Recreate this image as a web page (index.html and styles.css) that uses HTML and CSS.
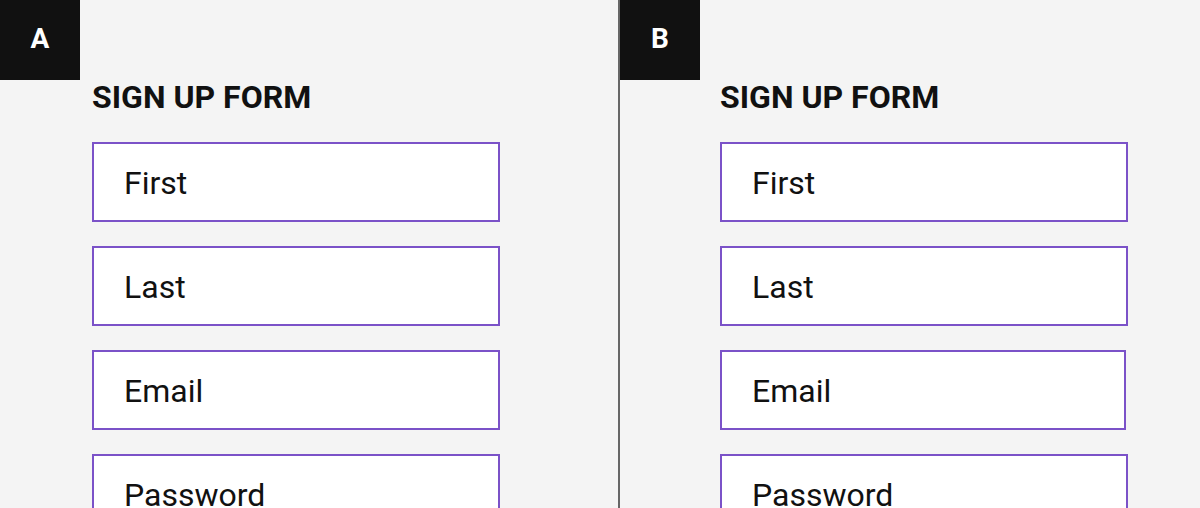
FILE: index.html
```html
<!DOCTYPE html>
<html lang="en">
<head>
<meta charset="utf-8">
<title>Sign up form A/B</title>
<link rel="stylesheet" href="styles.css">
</head>
<body>
<div class="compare">
  <section class="panel panel-a">
    <div class="badge">A</div>
    <form class="form">
      <h2 class="title">SIGN UP FORM</h2>
      <input class="field" type="text" placeholder="First">
      <input class="field" type="text" placeholder="Last">
      <input class="field" type="email" placeholder="Email">
      <input class="field" type="password" placeholder="Password">
    </form>
  </section>
  <section class="panel panel-b">
    <div class="badge">B</div>
    <form class="form">
      <h2 class="title">SIGN UP FORM</h2>
      <input class="field" type="text" placeholder="First">
      <input class="field" type="text" placeholder="Last">
      <input class="field field-narrow" type="email" placeholder="Email">
      <input class="field" type="password" placeholder="Password">
    </form>
  </section>
</div>
</body>
</html>
```
FILE: styles.css
```css
html, body {
  margin: 0;
  padding: 0;
  background: #f4f4f4;
}

body {
  font-family: Roboto, "Liberation Sans", Arial, sans-serif;
  color: #111;
  height: 508px;
  overflow: hidden;
}

.compare {
  display: flex;
  height: 508px;
  overflow: hidden;
}

.panel {
  position: relative;
  box-sizing: border-box;
  overflow: hidden;
}

.panel-a {
  width: 620px;
  border-right: 2px solid #666;
  padding-left: 92px;
}

.panel-b {
  flex: 1;
  padding-left: 100px;
}

.badge {
  position: absolute;
  top: 0;
  left: 0;
  width: 80px;
  height: 80px;
  box-sizing: border-box;
  padding-bottom: 4px;
  background: #111;
  color: #fff;
  font-weight: 700;
  font-size: 28px;
  display: flex;
  align-items: center;
  justify-content: center;
}

.form {
  display: flex;
  flex-direction: column;
  gap: 24px;
  padding-top: 77px;
  margin: 0;
}

.title {
  margin: 0 0 1px;
  font-size: 32px;
  line-height: 40px;
  font-weight: 700;
  color: #111;
}

.field {
  box-sizing: border-box;
  width: 408px;
  height: 80px;
  flex: none;
  border: 2px solid #7b52c8;
  border-radius: 0;
  background: #fff;
  padding: 2px 30px 0;
  margin: 0;
  font-family: Roboto, "Liberation Sans", Arial, sans-serif;
  font-size: 32px;
  color: #111;
  outline: none;
}

.field::placeholder {
  color: #111;
  opacity: 1;
}

.field-narrow {
  width: 406px;
}
```
